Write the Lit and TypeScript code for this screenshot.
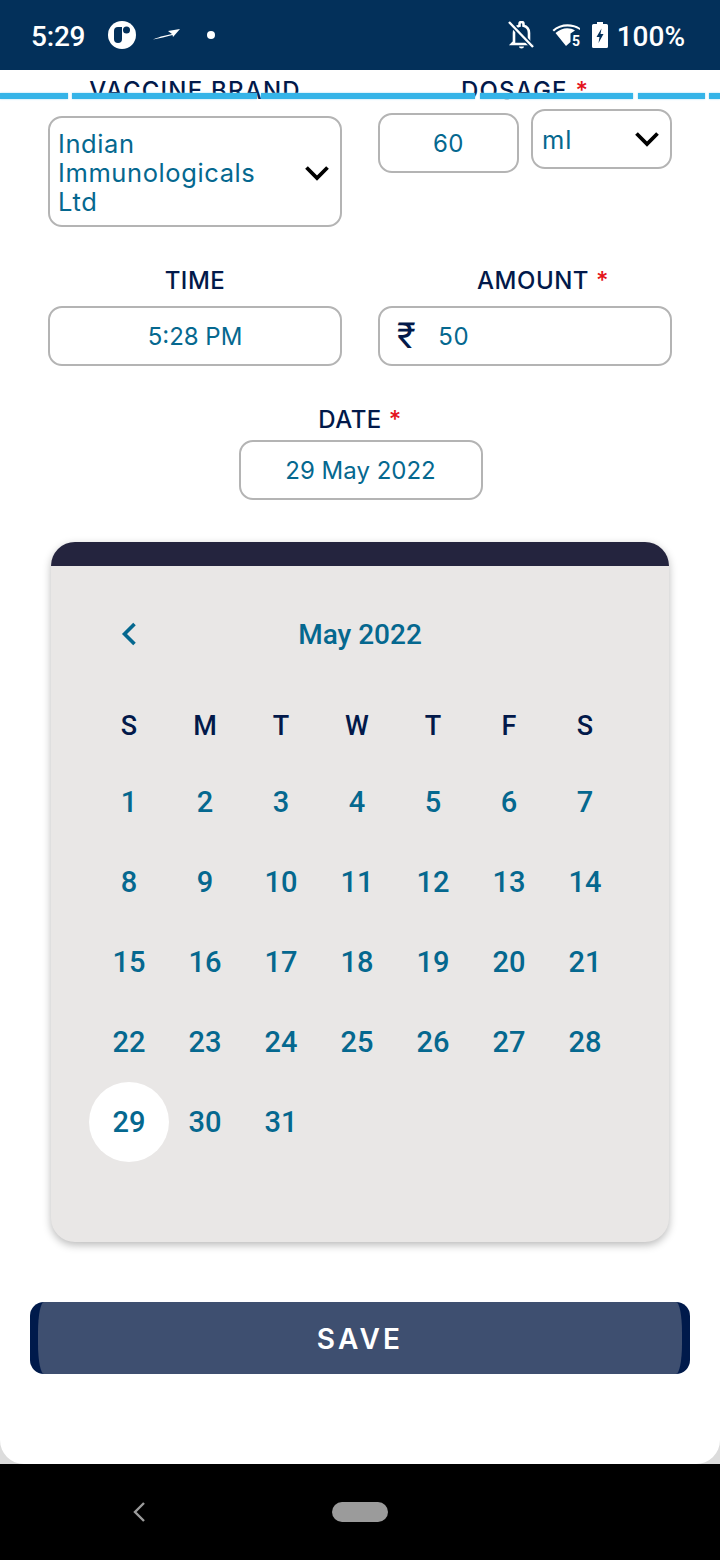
import { LitElement, html, css } from "lit";
import { customElement } from "lit/decorators.js";

const chevron = html`<svg class="chev" viewBox="0 0 26 18" width="26" height="18"><path d="M2.5 3.5 L13 14 L23.5 3.5" fill="none" stroke="#000" stroke-width="3.8"/></svg>`;

const dashes: [number, number][] = [[0, 68], [72, 185], [261, 214], [480, 153], [638, 67], [709, 11]];

@customElement("app-root")
export class AppRoot extends LitElement {
  static styles = css`
    :host { display: block; width: 720px; height: 1560px; background: #dcdcdc; font-family: Inter, "Noto Sans", sans-serif; overflow: hidden; position: relative; }
    * { box-sizing: border-box; }
    .status { height: 70px; background: #03305a; color: #fff; font-family: Roboto, sans-serif; font-size: 28px; font-weight: 500; display: flex; align-items: center; padding: 0 35px 0 32px; }
    .status .time { width: 75px; padding-top: 2px; letter-spacing: -0.2px; margin-left: -1px; margin-right: 1px; }
    .status .pct { padding-top: 2px; }
    .status svg { display: block; flex: none; }
    .spacer { flex: 1; }
    .sheet { height: 1394px; background: #fff; border-radius: 0 0 24px 24px; overflow: hidden; position: relative; padding: 6px 48px 0; }
    .dashes { position: absolute; left: 0; top: 23px; width: 720px; height: 6px; }
    .dash { position: absolute; top: 0; height: 6px; background: #35b4e8; box-shadow: 0 0 2px #8fd6f2; }
    .grid2 { display: grid; grid-template-columns: 294px 294px; column-gap: 36px; }
    .label { font-size: 24px; font-weight: 550; letter-spacing: 0.5px; color: #02194a; text-align: center; line-height: 30px; white-space: nowrap; }
    .clip { letter-spacing: 1.2px; }
    .req { color: #e4141b; }
    .box { border: 2px solid #b4b4b4; border-radius: 14px; background: #fff; color: #05688f; font-size: 24px; height: 60px; display: flex; align-items: center; justify-content: center; }
    .row1 { height: 190px; }
    .brand { height: 111px; margin-top: 10px; justify-content: space-between; padding: 2px 10px 0 8px; line-height: 29px; font-size: 25.5px; letter-spacing: 0.6px; }
    .dosage { display: flex; gap: 12px; align-items: flex-start; }
    .dose { width: 141px; margin-top: 7px; letter-spacing: 0.6px; }
    .unit { width: 141px; margin-top: 3px; justify-content: space-between; padding: 0 10px 0 9px; font-size: 25.5px; letter-spacing: 1px; }
    .row2 { height: 139px; }
    .row2 .label { margin-bottom: 10px; }
    .offset { padding-left: 36px; }
    .amount { justify-content: flex-start; padding: 0 17px; gap: 22px; letter-spacing: 0.6px; }
    .rupee { font-family: Roboto, sans-serif; color: #02194a; font-size: 36px; font-weight: 400; line-height: 40px; }
    .date { display: flex; flex-direction: column; align-items: center; height: 137px; }
    .date .box { width: 244px; margin-top: 5px; margin-left: 1px; }
    .cal { margin-left: 3px; width: 618px; height: 700px; background: #e9e7e6; border-radius: 24px; box-shadow: 0 3px 8px rgba(0,0,0,.28); overflow: hidden; font-family: Roboto, sans-serif; font-weight: 500; }
    .calhead { height: 24px; background: #24243e; }
    .month { height: 136px; display: flex; align-items: center; justify-content: center; color: #05688f; font-size: 28px; position: relative; }
    .month svg { position: absolute; left: 68px; top: 55px; }
    .days { display: grid; grid-template-columns: repeat(7, 76px); grid-template-rows: 72px; grid-auto-rows: 80px; padding: 0 40px; margin-top: -12px; }
    .dow { color: #02194a; font-size: 27px; display: flex; align-items: center; justify-content: center; }
    .day { color: #05688f; font-size: 29px; display: flex; align-items: center; justify-content: center; position: relative; z-index: 0; }
    .day.sel::before { content: ""; position: absolute; z-index: -1; left: -2px; top: 0; width: 80px; height: 80px; border-radius: 50%; background: #fff; }
    .save { margin: 60px 0 0 -18px; width: 660px; height: 72px; border-radius: 14px; background: #001a4b; display: flex; justify-content: center; }
    .saveinner { width: 644px; height: 72px; padding-top: 2px; background: #3e4f70; border-radius: 6px / 30px; color: #fff; font-size: 28px; font-weight: 600; letter-spacing: 3.2px; display: flex; align-items: center; justify-content: center; }
    .nav { height: 96px; background: #000; display: flex; align-items: center; position: relative; padding-left: 132px; }
    .pill { width: 56px; height: 20px; border-radius: 10px; background: #9b9b9b; margin-left: 186px; }
  `;

  private statusIcons() {
    return html`
      <svg width="30" height="30" viewBox="0 0 30 30"><circle cx="15" cy="15" r="14" fill="#fff"/><path d="M7 11 a4 4 0 0 1 4-4 H15 V19 a4 4 0 0 1 -8 0Z" fill="#03305a"/><circle cx="19.500" cy="10" r="3.500" fill="#03305a"/></svg>
      <svg width="28" height="12" viewBox="0 0 28 12" style="margin-left:16px;margin-top:-2px"><path d="M0 11.500 C8 8 13 7.500 19 6 L15 3 L27 1 L20 9 L19.500 7 C13 8.500 7 10.500 0 11.500Z" fill="#fff"/></svg>
      <svg width="10" height="10" viewBox="0 0 10 10" style="margin-left:25px"><circle cx="5" cy="5" r="4" fill="#fff"/></svg>
      <div class="spacer"></div>
      <svg width="26" height="28" viewBox="0 0 26 28" style="margin-right:18px"><path d="M6 21 V12 C6 8 8.500 5.500 11.500 4.800 V3 a2 2 0 0 1 4 0 V4.800 C18.500 5.500 21 8 21 12 V21 L23 23 H4 Z" fill="none" stroke="#fff" stroke-width="2.600"/><path d="M11 25.500 h5 a2.500 2 0 0 1 -5 0Z" fill="#fff"/><path d="M1 1 L25 26" stroke="#03305a" stroke-width="5"/><path d="M1 1 L25 26" stroke="#fff" stroke-width="2.400"/></svg>
      <svg width="29" height="26" viewBox="0 0 29 26" style="margin-right:11px"><path d="M0.500 8 C8 1 20 0.500 28 6 L28 8 C20 3 8 3.500 2 9.500Z" fill="#fff"/><path d="M3.500 11 C10 5 18 5 23 8.500 L18.500 11.500 V20 L14 24 Z" fill="#fff"/><text x="20" y="24" font-family="Roboto" font-size="14" font-weight="700" fill="#fff">5</text></svg>
      <svg width="16" height="26" viewBox="0 0 16 26" style="margin-right:9px"><path d="M5 0 h6 v2 h3.500 a1.500 1.500 0 0 1 1.500 1.500 V24.500 a1.500 1.500 0 0 1 -1.500 1.500 H1.500 A1.500 1.500 0 0 1 0 24.500 V3.500 A1.500 1.500 0 0 1 1.500 2 H5Z" fill="#fff"/><path d="M9.500 6.500 L4.500 15 H7.500 L6.500 21 L11.500 12 H8.500Z" fill="#03305a"/></svg>
      <span class="pct">100%</span>`;
  }

  render() {
    const dows = ["S", "M", "T", "W", "T", "F", "S"];
    const days = Array.from({ length: 31 }, (_, i) => i + 1);
    return html`
      <div class="status"><span class="time">5:29</span>${this.statusIcons()}</div>
      <div class="sheet">
        <div class="grid2 row1">
          <div>
            <div class="label clip">VACCINE BRAND</div>
            <div class="box brand"><span>Indian<br />Immunologicals<br />Ltd</span>${chevron}</div>
          </div>
          <div>
            <div class="label clip">DOSAGE <span class="req">*</span></div>
            <div class="dosage">
              <div class="box dose">60</div>
              <div class="box unit"><span>ml</span>${chevron}</div>
            </div>
          </div>
        </div>
        <div class="dashes">${dashes.map(([l, w]) => html`<div class="dash" style="left:${l}px;width:${w}px"></div>`)}</div>
        <div class="grid2 row2">
          <div><div class="label">TIME</div><div class="box">5:28 PM</div></div>
          <div>
            <div class="label offset">AMOUNT <span class="req">*</span></div>
            <div class="box amount"><span class="rupee">₹</span><span>50</span></div>
          </div>
        </div>
        <div class="date">
          <div class="label">DATE <span class="req">*</span></div>
          <div class="box">29 May 2022</div>
        </div>
        <div class="cal">
          <div class="calhead"></div>
          <div class="month">
            <svg width="20" height="26" viewBox="0 0 20 26"><path d="M15.500 3 L5.500 13 L15.500 23" fill="none" stroke="#05688f" stroke-width="3.600"/></svg>
            May 2022
          </div>
          <div class="days">
            ${dows.map((d) => html`<div class="dow">${d}</div>`)}
            ${days.map((d) => html`<div class="day ${d === 29 ? "sel" : ""}">${d}</div>`)}
          </div>
        </div>
        <div class="save"><div class="saveinner">SAVE</div></div>
      </div>
      <div class="nav">
        <svg width="14" height="22" viewBox="0 0 14 22"><path d="M12 2 L3 11 L12 20" fill="none" stroke="#9b9b9b" stroke-width="2.400"/></svg>
        <div class="pill"></div>
      </div>
    `;
  }
}
